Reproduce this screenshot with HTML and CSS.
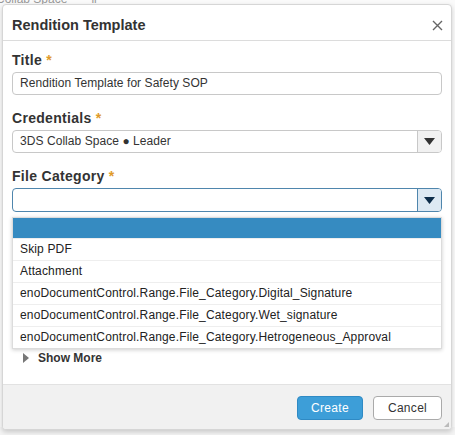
FILE: index.html
```html
<!DOCTYPE html>
<html>
<head>
<meta charset="utf-8">
<link rel="stylesheet" href="styles.css">
</head>
<body>
<div class="backdrop">
  <div class="bg-row"><span class="bg-text">Collab Space</span><span class="bg-text">ll</span></div>
</div>
<div class="dialog">
  <div class="dlg-header">
    <span class="dlg-title">Rendition Template</span>
    <svg class="close" width="11" height="11" viewBox="0 0 11 11"><path d="M1 1L10 10M10 1L1 10" stroke="#666" stroke-width="1.4" fill="none"/></svg>
  </div>
  <div class="dlg-body">
    <div class="field">
      <div class="label">Title <span class="req">*</span></div>
      <div class="input">Rendition Template for Safety SOP</div>
    </div>
    <div class="field">
      <div class="label">Credentials <span class="req">*</span></div>
      <div class="select">
        <div class="select-value">3DS Collab Space ● Leader</div>
        <div class="select-btn"><svg width="11" height="7" viewBox="0 0 11 7"><path d="M0 0H11L5.5 7Z" fill="#333"/></svg></div>
      </div>
    </div>
    <div class="field">
      <div class="label">File Category <span class="req">*</span></div>
      <div class="select focus">
        <div class="select-value"></div>
        <div class="select-btn"><svg width="11" height="7" viewBox="0 0 11 7"><path d="M0 0H11L5.5 7Z" fill="#0d2d4a"/></svg></div>
      </div>
      <div class="options">
        <div class="option active"></div>
        <div class="option">Skip PDF</div>
        <div class="option">Attachment</div>
        <div class="option">enoDocumentControl.Range.File_Category.Digital_Signature</div>
        <div class="option">enoDocumentControl.Range.File_Category.Wet_signature</div>
        <div class="option">enoDocumentControl.Range.File_Category.Hetrogeneous_Approval</div>
      </div>
    </div>
    <div class="show-more">
      <svg width="6" height="10" viewBox="0 0 6 10"><path d="M0 0L6 5L0 10Z" fill="#777"/></svg>
      <span>Show More</span>
    </div>
  </div>
  <div class="dlg-footer">
    <button class="btn primary">Create</button>
    <button class="btn">Cancel</button>
    <svg class="grip" width="5" height="5" viewBox="0 0 5 5"><path d="M5 0V5H0Z" fill="#bbb"/></svg>
  </div>
</div>
</body>
</html>
```
FILE: styles.css
```css
html, body {
  margin: 0;
  padding: 0;
}
body {
  width: 455px;
  height: 435px;
  overflow: hidden;
  background: #f4f4f4;
  font-family: Arial, "Liberation Sans", sans-serif;
  color: #333;
  position: relative;
}
.backdrop {
  height: 435px;
  background: #fafafa;
}
.bg-row {
  display: flex;
  gap: 24px;
  margin-top: -8px;
  margin-left: -4px;
}
.bg-text {
  font-size: 12px;
  color: #999;
  line-height: 14px;
}
.dialog {
  position: absolute;
  left: 2px;
  top: 4px;
  width: 450px;
  height: 426px;
  background: #fff;
  border: 1px solid #d6d6d6;
  box-sizing: border-box;
  border-radius: 4px;
  box-shadow: 0 2px 5px rgba(0,0,0,0.18);
  display: flex;
  flex-direction: column;
  overflow: hidden;
}
.dlg-header {
  flex: none;
  border-bottom: 1px solid #dcdcdc;
  display: flex;
  align-items: center;
  justify-content: space-between;
  padding: 4px 8px 0 9px;
  box-sizing: border-box;
  height: 36px;
}
.dlg-title {
  font-size: 14.5px;
  font-weight: bold;
  color: #333;
}
.close {
  margin-top: 1px;
}
.dlg-body {
  flex: 1;
  min-height: 0;
  padding: 10px 9px 0 9px;
}
.field {
  margin-bottom: 14px;
}
.label {
  font-size: 14px;
  font-weight: bold;
  line-height: 18px;
  color: #333;
  letter-spacing: 0.3px;
  margin-bottom: 3px;
}
.req {
  color: #e09a2a;
  font-weight: bold;
}
.input {
  height: 23px;
  box-sizing: border-box;
  border: 1px solid #c8c8c8;
  border-radius: 4px;
  font-size: 12px;
  line-height: 21px;
  padding-left: 7px;
  color: #333;
  letter-spacing: 0.06px;
}
.select {
  display: flex;
  height: 23px;
  box-sizing: border-box;
  border: 1px solid #c8c8c8;
  border-radius: 4px;
  overflow: hidden;
}
.select-value {
  flex: 1;
  font-size: 12px;
  line-height: 21px;
  padding-left: 7px;
  color: #333;
  letter-spacing: 0.06px;
}
.select-btn {
  width: 23px;
  border-left: 1px solid #c8c8c8;
  background: #f1f1f1;
  display: flex;
  align-items: center;
  justify-content: center;
}
.select.focus {
  border-color: #4f86ad;
  height: 24px;
}
.select.focus .select-btn {
  background: #dde9f3;
  border-left-color: #4f86ad;
}
.options {
  margin-top: 5px;
  border: 1px solid #dcdcdc;
  box-shadow: 0 1px 4px rgba(0,0,0,0.2);
  background: #fff;
}
.option {
  height: 22px;
  box-sizing: border-box;
  border-top: 1px solid #eeeeee;
  font-size: 12px;
  line-height: 21px;
  padding-left: 7px;
  color: #222;
  letter-spacing: 0.15px;
}
.option.active {
  background: #368bc1;
  border-top: none;
  height: 20px;
}
.show-more {
  display: flex;
  align-items: center;
  gap: 9px;
  margin-top: -12px;
  padding-left: 11px;
  font-size: 12px;
  font-weight: bold;
  line-height: 14px;
  color: #333;
}
.dlg-footer {
  height: 44px;
  flex: none;
  background: #f1f1f1;
  border-top: 1px solid #e2e2e2;
  display: flex;
  align-items: center;
  justify-content: flex-end;
  gap: 10px;
  padding-right: 9px;
  position: relative;
}
.btn {
  height: 24px;
  box-sizing: border-box;
  font-family: Arial, "Liberation Sans", sans-serif;
  font-size: 12px;
  border-radius: 4px;
  border: 1px solid #aaa;
  background: #fff;
  color: #333;
  padding: 0;
  width: 69px;
  letter-spacing: 0.3px;
  margin-top: 1px;
}
.btn.primary {
  background: #3d9ed8;
  border-color: #2f8ac4;
  color: #fff;
  width: 66px;
}
.grip {
  position: absolute;
  right: 2px;
  bottom: 2px;
}
```
